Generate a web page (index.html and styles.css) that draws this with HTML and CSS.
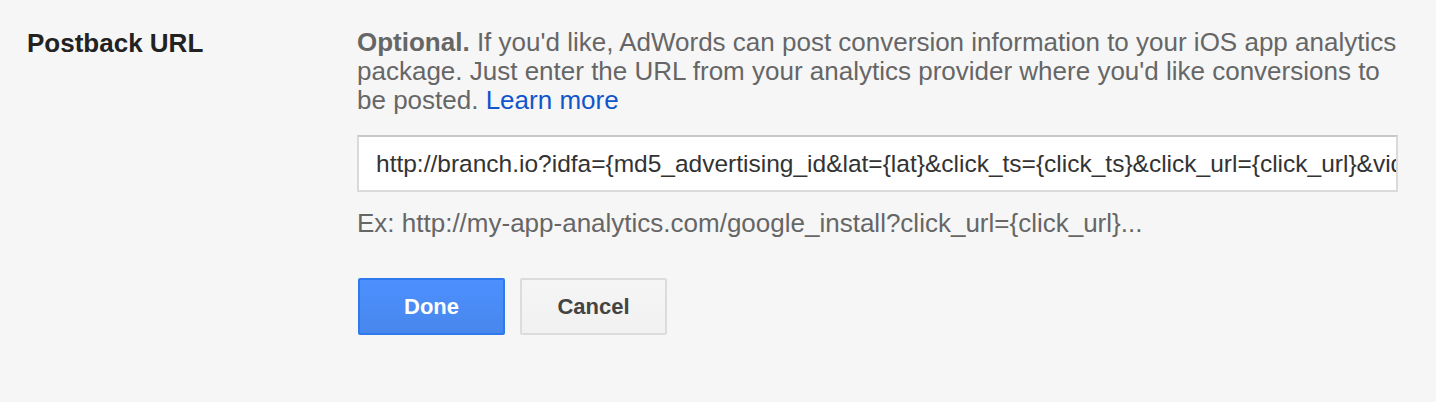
FILE: index.html
```html
<!DOCTYPE html>
<html>
<head>
<meta charset="utf-8">
<link rel="stylesheet" href="styles.css">
</head>
<body>
<div class="row">
  <div class="label">Postback URL</div>
  <div class="content">
    <p class="desc"><b>Optional.</b> If you'd like, AdWords can post conversion information to your iOS app analytics package. Just enter the URL from your analytics provider where you'd like conversions to be posted. <a href="#">Learn more</a></p>
    <div class="field"><span>http://branch.io?idfa={md5_advertising_id&amp;lat={lat}&amp;click_ts={click_ts}&amp;click_url={click_url}&amp;video_id={video_id}</span></div>
    <div class="example">Ex: http://my-app-analytics.com/google_install?click_url={click_url}...</div>
    <div class="actions">
      <button class="btn primary">Done</button>
      <button class="btn">Cancel</button>
    </div>
  </div>
</div>
</body>
</html>
```
FILE: styles.css
```css
html, body {
  margin: 0;
  background: #f6f6f6;
  font-family: "Liberation Sans", Arial, sans-serif;
}
.row {
  display: flex;
  padding: 28px 0 0 27px;
}
.label {
  width: 330px;
  font-weight: bold;
  font-size: 26px;
  color: #222;
  line-height: 29px;
  padding-top: 1px;
}
.content {
  width: 1041px;
}
.desc {
  margin: 0;
  font-size: 26px;
  line-height: 29px;
  color: #666;
}
.desc a {
  color: #1155cc;
  text-decoration: none;
}
.field {
  box-sizing: border-box;
  margin-top: 20px;
  width: 1041px;
  height: 57px;
  background: #fff;
  border: 2px solid #dadada;
  border-top-color: #c8c8c8;
  display: flex;
  align-items: center;
  padding: 0 0 0 17px;
  overflow: hidden;
  white-space: nowrap;
  font-size: 24.5px;
  color: #333;
}
.example {
  margin-top: 17px;
  font-size: 26px;
  line-height: 29px;
  color: #666;
}
.actions {
  display: flex;
  gap: 15px;
  margin-top: 40px;
}
.btn {
  box-sizing: border-box;
  width: 147px;
  height: 57px;
  font-family: "Liberation Sans", Arial, sans-serif;
  font-weight: bold;
  font-size: 22px;
  color: #444;
  background: linear-gradient(#f5f5f5, #f1f1f1);
  border: 2px solid #dcdcdc;
  border-radius: 2px;
  padding: 0;
}
.btn.primary {
  color: #fff;
  background: linear-gradient(#4d90fe, #4787ed);
  border-color: #3079ed;
  margin-left: 1px;
}
```
